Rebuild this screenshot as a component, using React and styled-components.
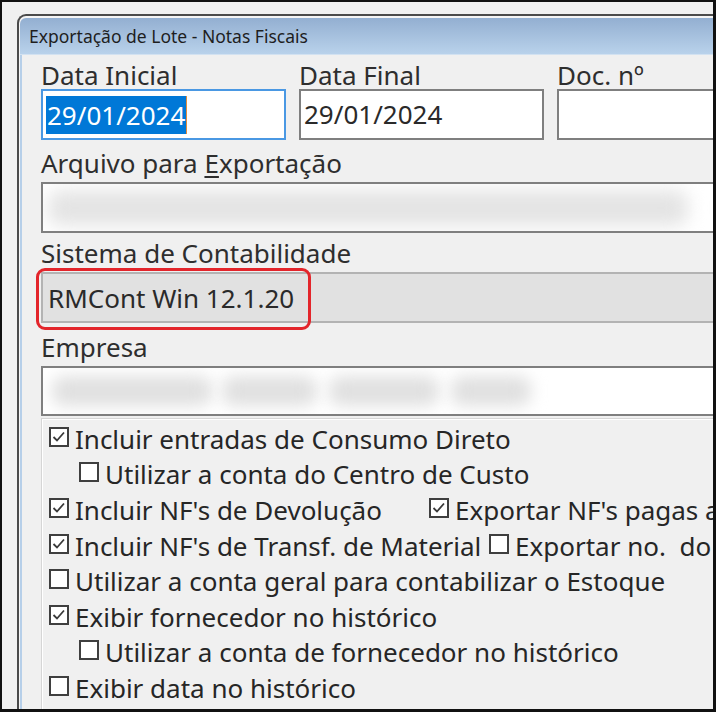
import React from 'react';
import styled, { createGlobalStyle } from 'styled-components';

const GlobalStyle = createGlobalStyle`
  html, body {
    margin: 0;
    padding: 0;
    background: #f0f0f0;
  }
  body {
    font-family: "Noto Sans", "Open Sans", sans-serif;
    color: #2a2a2a;
  }
  * {
    box-sizing: border-box;
  }
`;

const Screen = styled.div`
  width: 716px;
  height: 712px;
  border: 2px solid #111;
  border-right-width: 3px;
  border-bottom-width: 3px;
  background: #f0f0f0;
  overflow: hidden;
  padding: 12px 0 0 15px;
`;

const Window = styled.div`
  width: 760px;
  height: 740px;
  display: flex;
  flex-direction: column;
  border-top: 2px solid #4a4a4a;
  border-left: 2px solid #4a4a4a;
  border-top-left-radius: 9px;
  background: #f4f4f4;
  padding: 2px 0 0 1px;
`;

const TitleBar = styled.div`
  height: 37px;
  padding-left: 9px;
  background: linear-gradient(to bottom, #93afd1, #b9d2eb);
  border-top-left-radius: 6px;
  border-bottom: 1px solid #d3e2f1;
  font-size: 17.5px;
  line-height: 36px;
  color: #1e1e1e;
  white-space: nowrap;
`;

const Client = styled.div`
  flex: 1;
  display: flex;
  flex-direction: column;
  border-left: 2px solid #b6cfe9;
  background: #f0f0f0;
  padding: 6px 0 0 19px;
`;

const DateRow = styled.div`
  display: grid;
  grid-template-columns: 245px 245px 1fr;
  column-gap: 13px;
`;

const Field = styled.div`
  display: flex;
  flex-direction: column;
  margin-top: ${p => p.$top || 0}px;
`;

const Label = styled.div`
  font-size: 26px;
  height: ${p => p.$lh}px;
  line-height: ${p => p.$lh}px;
  white-space: nowrap;
  color: #2e2e2e;

  u {
    text-decoration-thickness: 2px;
    text-underline-offset: 3px;
  }
`;

const TextBox = styled.div`
  height: ${p => p.$h || 51}px;
  display: flex;
  align-items: center;
  padding: 0 3px;
  border: 2px solid ${p => (p.$focused ? '#4a98e3' : '#7f7f7f')};
  background: #fff;
  font-size: 26px;
  line-height: 47px;
  color: #2a2a2a;
  white-space: nowrap;
  overflow: hidden;
`;

const Selection = styled.span`
  display: inline-block;
  height: 38px;
  line-height: 38px;
  padding: 0 1px;
  background: #0078d7;
  color: #fff;
  border-right: 1px solid #e08b3c;
`;

const Smudge = styled.span`
  display: block;
  flex-shrink: 0;
  width: ${p => p.$w}px;
  height: ${p => p.$h || 28}px;
  margin-left: ${p => p.$ml || 0}px;
  border-radius: 12px;
  background: ${p => p.$c || '#dcdcdc'};
  filter: blur(${p => p.$blur || 8}px);
`;

const ComboWrap = styled.div`
  position: relative;
`;

const Combo = styled.div`
  height: 51px;
  display: flex;
  align-items: center;
  padding: 0 5px;
  border: 2px solid #b3b3b3;
  background: #e1e1e1;
  font-size: 26px;
  color: #2a2a2a;
  white-space: nowrap;
`;

const Highlight = styled.div`
  position: absolute;
  left: -5px;
  top: -4px;
  width: 275px;
  height: 62px;
  border: 3px solid #e3252b;
  border-radius: 9px;
  pointer-events: none;
`;

const Group = styled.div`
  margin-top: 2px;
  flex: 1;
  border-top: 1px solid #d6d6d6;
  border-left: 1px solid #d6d6d6;
  box-shadow: inset 1px 1px 0 #fff;
  padding-left: 7px;
`;

const CheckRow = styled.div`
  display: flex;
  align-items: center;
  height: 35.6px;
  padding-left: ${p => p.$indent || 0}px;
`;

const CheckItem = styled.label`
  display: flex;
  align-items: center;
  flex-shrink: 0;
  width: ${p => (p.$width ? `${p.$width}px` : 'auto')};
`;

const Box = styled.span`
  width: 20px;
  height: 20px;
  flex-shrink: 0;
  display: flex;
  align-items: center;
  justify-content: center;
  margin-right: 6px;
  border: 2px solid #3f3f3f;
  background: #fff;
`;

const Caption = styled.span`
  font-size: 26px;
  line-height: 30px;
  padding-top: 4px;
  white-space: pre;
  color: #262626;
`;

const Check = ({ checked, children, width }) => (
  <CheckItem $width={width}>
    <Box>
      {checked && (
        <svg width="16" height="16" viewBox="0 0 16 16">
          <polyline points="2.5,8 6,11.5 13,3.5" fill="none" stroke="#3a3a3a" strokeWidth="1.8" />
        </svg>
      )}
    </Box>
    <Caption>{children}</Caption>
  </CheckItem>
);

export default function App() {
  return (
    <Screen>
      <GlobalStyle />
      <Window>
        <TitleBar>Exportação de Lote - Notas Fiscais</TitleBar>
        <Client>
          <DateRow>
            <Field>
              <Label $lh={28}>Data Inicial</Label>
              <TextBox $focused>
                <Selection>29/01/2024</Selection>
              </TextBox>
            </Field>
            <Field>
              <Label $lh={28}>Data Final</Label>
              <TextBox>29/01/2024</TextBox>
            </Field>
            <Field>
              <Label $lh={28}>Doc. nº</Label>
              <TextBox />
            </Field>
          </DateRow>

          <Field $top={4}>
            <Label $lh={38}>
              Arquivo para <u>E</u>xportação
            </Label>
            <TextBox>
              <Smudge $w={640} $h={36} $c="#e4e4e4" $blur={9} $ml={2} />
            </TextBox>
          </Field>

          <Field $top={1}>
            <Label $lh={38}>Sistema de Contabilidade</Label>
            <ComboWrap>
              <Combo>RMCont Win 12.1.20</Combo>
              <Highlight />
            </ComboWrap>
          </Field>

          <Field $top={5}>
            <Label $lh={38}>Empresa</Label>
            <TextBox $h={50}>
              <Smudge $w={160} $h={30} $ml={6} $c="#e0e0e0" />
              <Smudge $w={95} $h={30} $ml={10} $c="#e0e0e0" />
              <Smudge $w={110} $h={30} $ml={12} $c="#e0e0e0" />
              <Smudge $w={80} $h={30} $ml={12} $c="#e0e0e0" />
            </TextBox>
          </Field>

          <Group>
            <CheckRow>
              <Check checked>Incluir entradas de Consumo Direto</Check>
            </CheckRow>
            <CheckRow $indent={30}>
              <Check>Utilizar a conta do Centro de Custo</Check>
            </CheckRow>
            <CheckRow>
              <Check checked width={380}>Incluir NF's de Devolução</Check>
              <Check checked>Exportar NF's pagas antecipadamente</Check>
            </CheckRow>
            <CheckRow>
              <Check checked width={440}>Incluir NF's de Transf. de Material</Check>
              <Check>Exportar no.  do documento</Check>
            </CheckRow>
            <CheckRow>
              <Check>Utilizar a conta geral para contabilizar o Estoque</Check>
            </CheckRow>
            <CheckRow>
              <Check checked>Exibir fornecedor no histórico</Check>
            </CheckRow>
            <CheckRow $indent={30}>
              <Check>Utilizar a conta de fornecedor no histórico</Check>
            </CheckRow>
            <CheckRow>
              <Check>Exibir data no histórico</Check>
            </CheckRow>
          </Group>
        </Client>
      </Window>
    </Screen>
  );
}
